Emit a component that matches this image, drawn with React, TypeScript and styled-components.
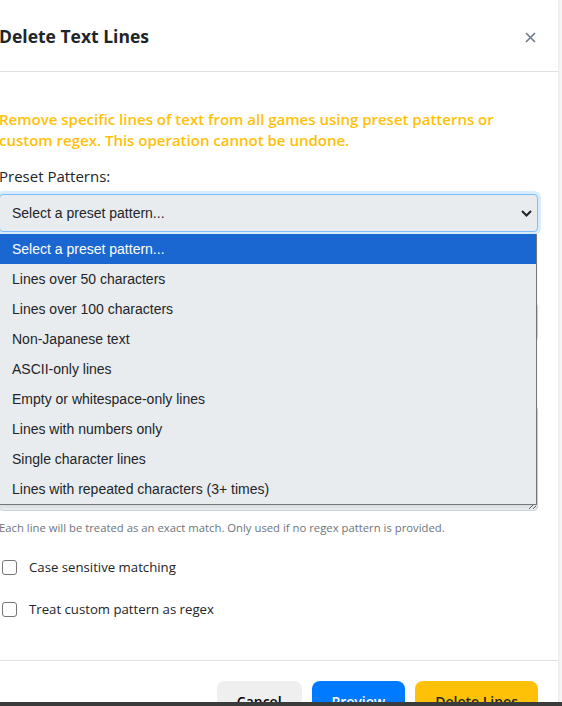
import { FunctionComponent } from "react";
import styled, { createGlobalStyle } from "styled-components";

const GlobalStyle = createGlobalStyle`
  html, body {
    margin: 0;
    padding: 0;
  }
  body {
    background-color: #f5f5f5;
    font-family: "Open Sans", "Noto Sans", sans-serif;
    color: #212529;
  }
`;

const Screen = styled.div`
  width: 562px;
  height: 706px;
  display: flex;
  flex-direction: column;
  overflow: hidden;
`;

const Viewport = styled.div`
  flex: 1;
  min-height: 0;
  display: flex;
  align-items: flex-start;
  overflow: hidden;
`;

const Taskbar = styled.div`
  height: 4px;
  flex-shrink: 0;
  background-color: #3b3b3b;
`;

const Modal = styled.div`
  margin-left: -21px;
  width: 579px;
  flex-shrink: 0;
  background-color: #fff;
  box-shadow: 1px 0 2px rgba(0, 0, 0, 0.05);
`;

const Header = styled.div`
  height: 72px;
  box-sizing: border-box;
  padding: 0 20px;
  display: flex;
  align-items: center;
  justify-content: space-between;
  border-bottom: 1px solid #dee2e6;
`;

const Title = styled.h2`
  margin: 0;
  font-size: 17.5px;
  font-weight: 700;
  color: #212529;
`;

const CloseButton = styled.button`
  width: 16px;
  height: 16px;
  padding: 0;
  margin-top: 4px;
  border: none;
  background: none;
  display: flex;
  align-items: center;
  justify-content: center;
  color: #6c7a89;
  cursor: pointer;
`;

const Body = styled.div`
  padding: 37px 20px 20px;
`;

const Warning = styled.p`
  margin: 0 0 14px;
  font-size: 15px;
  line-height: 21px;
  font-weight: 600;
  color: #ffc107;
`;

const Group = styled.div<{ $gap?: number }>`
  margin-bottom: ${(p) => p.$gap ?? 16}px;
`;

const Label = styled.label`
  display: block;
  margin-bottom: 7px;
  font-size: 15px;
  line-height: 22px;
  font-weight: 500;
  color: #212529;
`;

const SelectWrap = styled.div`
  position: relative;
`;

const Select = styled.select`
  display: block;
  width: 100%;
  height: 38px;
  box-sizing: border-box;
  padding: 0 30px 0 12px;
  appearance: none;
  background-color: #e9ecef;
  border: 1px solid #80bdff;
  border-radius: 4px;
  box-shadow: 0 0 0 3px rgba(0, 123, 255, 0.15);
  font-family: "Liberation Sans", Arial, sans-serif;
  font-size: 14px;
  color: #212529;
  outline: none;
`;

const Chevron = styled.svg`
  position: absolute;
  right: 6px;
  top: 16px;
  pointer-events: none;
`;

const Listbox = styled.ul`
  position: absolute;
  top: calc(100% + 2px);
  left: 0;
  right: 1px;
  z-index: 5;
  margin: 0;
  padding: 0;
  list-style: none;
  background-color: #e9ecef;
  border: 1px solid #767676;
  border-top: none;
  box-shadow: 0 2px 3px rgba(0, 0, 0, 0.08);
`;

const Option = styled.li<{ $active?: boolean }>`
  height: 30px;
  padding-left: 12px;
  display: flex;
  align-items: center;
  font-family: "Liberation Sans", Arial, sans-serif;
  font-size: 14px;
  color: ${(p) => (p.$active ? "#fff" : "#212529")};
  background-color: ${(p) => (p.$active ? "#1a67d2" : "transparent")};
`;

const Input = styled.input`
  display: block;
  width: 100%;
  height: 38px;
  box-sizing: border-box;
  padding: 0 12px;
  background-color: #e9ecef;
  border: 1px solid #ced4da;
  border-radius: 4px;
  font-size: 14px;
`;

const TextArea = styled.textarea`
  display: block;
  width: 100%;
  height: 105px;
  box-sizing: border-box;
  padding: 8px 12px;
  background-color: #e9ecef;
  border: 1px solid #ced4da;
  border-radius: 4px;
  font-size: 14px;
  resize: vertical;
`;

const Hint = styled.small`
  display: block;
  margin-top: 8px;
  font-size: 11.3px;
  line-height: 18px;
  color: #6c757d;
`;

const CheckRow = styled.label`
  display: flex;
  align-items: center;
  gap: 12px;
  height: 24px;
  margin-top: 18px;
  font-size: 13.2px;
  color: #212529;
`;

const Checkbox = styled.input`
  appearance: none;
  width: 15px;
  height: 15px;
  margin: 0 0 0 3px;
  box-sizing: border-box;
  background-color: #fff;
  border: 1px solid #767676;
  border-radius: 3px;
`;

const Footer = styled.div`
  margin-top: 19px;
  padding: 20px;
  border-top: 1px solid #dee2e6;
  display: flex;
  justify-content: flex-end;
  gap: 10px;
`;

const Button = styled.button<{ $variant: "cancel" | "preview" | "danger" }>`
  height: 40px;
  padding: 0 20px;
  border: none;
  border-radius: 8px;
  font-family: "Open Sans", sans-serif;
  font-size: 14px;
  font-weight: 600;
  cursor: pointer;
  background-color: ${(p) =>
    p.$variant === "preview" ? "#007bff" : p.$variant === "danger" ? "#ffc107" : "#efefef"};
  color: ${(p) => (p.$variant === "preview" ? "#fff" : p.$variant === "danger" ? "#212529" : "#000")};
`;

const presets = [
  "Select a preset pattern...",
  "Lines over 50 characters",
  "Lines over 100 characters",
  "Non-Japanese text",
  "ASCII-only lines",
  "Empty or whitespace-only lines",
  "Lines with numbers only",
  "Single character lines",
  "Lines with repeated characters (3+ times)",
];

const App: FunctionComponent = () => {
  return (
    <Screen>
      <GlobalStyle />
      <Viewport>
        <Modal>
          <Header>
            <Title>Delete Text Lines</Title>
            <CloseButton aria-label="Close">
              <svg width="11" height="11" viewBox="0 0 11 11">
                <path d="M1 1l9 9M10 1l-9 9" stroke="currentColor" strokeWidth="1.6" />
              </svg>
            </CloseButton>
          </Header>
          <Body>
            <Warning>
              Remove specific lines of text from all games using preset patterns or custom regex. This
              operation cannot be undone.
            </Warning>
            <Group>
              <Label>Preset Patterns:</Label>
              <SelectWrap>
                <Select defaultValue="">
                  <option value="">Select a preset pattern...</option>
                </Select>
                <Chevron width="11" height="7" viewBox="0 0 11 7">
                  <path d="M1 1l4.5 4.5L10 1" stroke="#222" strokeWidth="2" fill="none" />
                </Chevron>
                <Listbox>
                  {presets.map((p, i) => (
                    <Option key={p} $active={i === 0}>
                      {p}
                    </Option>
                  ))}
                </Listbox>
              </SelectWrap>
              <Hint>Choose a common pattern or write your own below.</Hint>
            </Group>
            <Group $gap={10}>
              <Label>Custom Regex Pattern:</Label>
              <Input placeholder="e.g. ^\s*$" />
              <Hint>JavaScript regular expression.</Hint>
            </Group>
            <div>
              <Label>Custom Lines:</Label>
              <TextArea />
              <Hint>Each line will be treated as an exact match. Only used if no regex pattern is provided.</Hint>
            </div>
            <CheckRow>
              <Checkbox type="checkbox" />
              Case sensitive matching
            </CheckRow>
            <CheckRow>
              <Checkbox type="checkbox" />
              Treat custom pattern as regex
            </CheckRow>
          </Body>
          <Footer>
            <Button $variant="cancel">Cancel</Button>
            <Button $variant="preview">Preview</Button>
            <Button $variant="danger">Delete Lines</Button>
          </Footer>
        </Modal>
      </Viewport>
      <Taskbar />
    </Screen>
  );
};

export default App;
